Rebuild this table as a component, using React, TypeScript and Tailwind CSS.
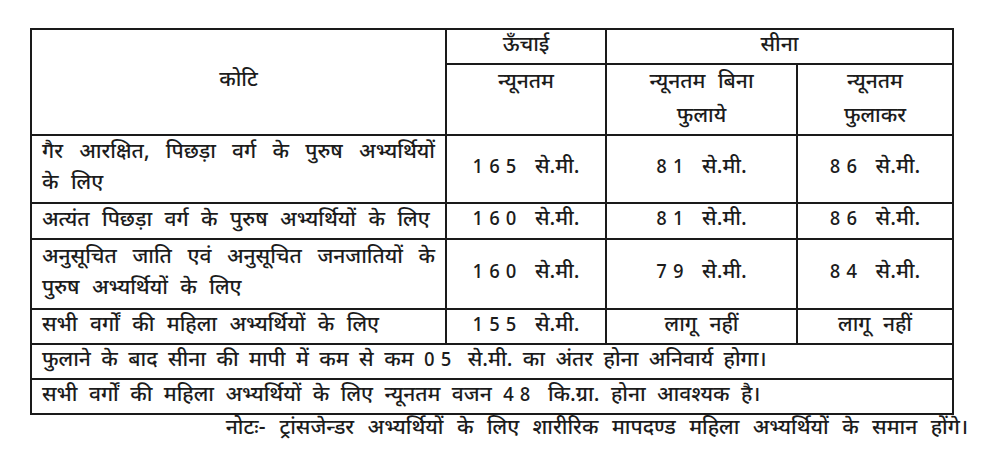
import React from "react";

const font = { fontFamily: '"Noto Sans Devanagari", "Noto Sans", "Lohit Devanagari", sans-serif' };

const D = ({ n }: { n: string }) => (
  <span className="tracking-[0.32em] text-[19px] font-medium">{n}</span>
);

const Num = ({ n }: { n: string }) => (
  <span>
    <D n={n} /> से.मी.
  </span>
);

export default function App() {
  const cell = "border-2 border-[#1a1a1a] align-middle";
  return (
    <div className="w-[1000px] h-[466px] bg-white text-[#1c1c1c] pt-[28px] pl-[30px] font-medium" style={font}>
      <table className="border-collapse table-fixed w-[922px] text-[21px] [word-spacing:7px]">
        <colgroup>
          <col className="w-[415px]" />
          <col className="w-[160px]" />
          <col className="w-[191px]" />
          <col className="w-[156px]" />
        </colgroup>
        <tbody>
          <tr className="h-[35px]">
            <td rowSpan={2} className={`${cell} text-center`}>कोटि</td>
            <td className={`${cell} text-center leading-[31px]`}>ऊँचाई</td>
            <td colSpan={2} className={`${cell} text-center leading-[31px]`}>सीना</td>
          </tr>
          <tr className="h-[70px]">
            <td className={`${cell} text-center align-top pt-[1px] leading-[34px]`}>न्यूनतम</td>
            <td className={`${cell} text-center align-top pt-[1px] leading-[34px]`}>न्यूनतम बिना<br />फुलाये</td>
            <td className={`${cell} text-center align-top pt-[1px] leading-[34px]`}>न्यूनतम<br />फुलाकर</td>
          </tr>
          <tr className="h-[68px]">
            <td className={`${cell} px-[10px] text-justify leading-[31px]`}>
              गैर आरक्षित, पिछड़ा वर्ग के पुरुष अभ्यर्थियों <span className="whitespace-nowrap">के लिए</span>
            </td>
            <td className={`${cell} text-center`}><Num n="165" /></td>
            <td className={`${cell} text-center`}><Num n="81" /></td>
            <td className={`${cell} text-center`}><Num n="86" /></td>
          </tr>
          <tr className="h-[36px]">
            <td className={`${cell} px-[10px] leading-[31px] whitespace-nowrap`}>अत्यंत पिछड़ा वर्ग के पुरुष अभ्यर्थियों के लिए</td>
            <td className={`${cell} text-center`}><Num n="160" /></td>
            <td className={`${cell} text-center`}><Num n="81" /></td>
            <td className={`${cell} text-center`}><Num n="86" /></td>
          </tr>
          <tr className="h-[70px]">
            <td className={`${cell} px-[10px] text-justify leading-[31px]`}>
              अनुसूचित जाति एवं अनुसूचित जनजातियों के <span className="whitespace-nowrap">पुरुष अभ्यर्थियों के लिए</span>
            </td>
            <td className={`${cell} text-center`}><Num n="160" /></td>
            <td className={`${cell} text-center`}><Num n="79" /></td>
            <td className={`${cell} text-center`}><Num n="84" /></td>
          </tr>
          <tr className="h-[35px]">
            <td className={`${cell} px-[10px] leading-[31px]`}>सभी वर्गों की महिला अभ्यर्थियों के लिए</td>
            <td className={`${cell} text-center`}><Num n="155" /></td>
            <td className={`${cell} text-center`}>लागू नहीं</td>
            <td className={`${cell} text-center`}>लागू नहीं</td>
          </tr>
          <tr className="h-[35px]">
            <td colSpan={4} className={`${cell} px-[10px] leading-[31px] [word-spacing:5px]`}>
              फुलाने के बाद सीना की मापी में कम से कम <D n="05" /> से.मी. का अंतर होना अनिवार्य होगा।
            </td>
          </tr>
          <tr className="h-[35px]">
            <td colSpan={4} className={`${cell} px-[10px] leading-[31px] [word-spacing:6px]`}>
              सभी वर्गों की महिला अभ्यर्थियों के लिए न्यूनतम वजन <D n="48" /> कि.ग्रा. होना आवश्यक है।
            </td>
          </tr>
        </tbody>
      </table>
      <div className="w-[938px] text-right text-[21px] [word-spacing:8px] leading-[28px] whitespace-nowrap">
        नोटः- ट्रांसजेन्डर अभ्यर्थियों के लिए शारीरिक मापदण्ड महिला अभ्यर्थियों के समान होंगे।
      </div>
    </div>
  );
}
